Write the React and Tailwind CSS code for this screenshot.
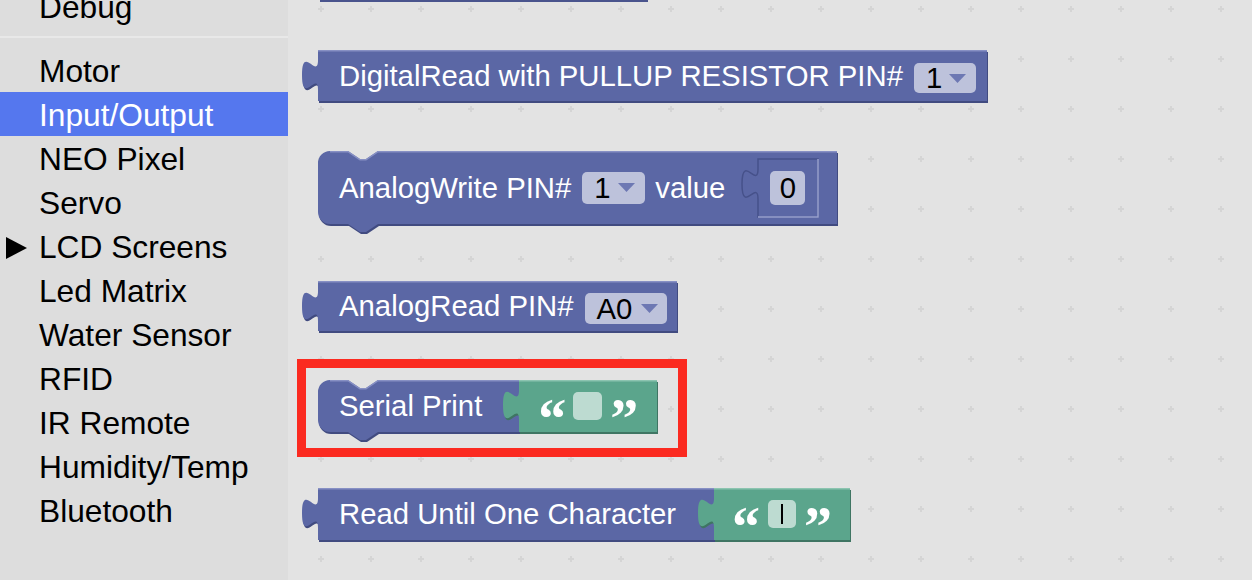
import React from 'react';

// Blockly toolbox + flyout with Input/Output blocks

const PURPLE = { fill: '#5b67a5', dark: '#414b80', light: '#8790c4' };
const GREEN = { fill: '#5ba58c', dark: '#3f7563', light: '#8cc4b0' };

const CATEGORIES = [
  'Motor',
  'Input/Output',
  'NEO Pixel',
  'Servo',
  'LCD Screens',
  'Led Matrix',
  'Water Sensor',
  'RFID',
  'IR Remote',
  'Humidity/Temp',
  'Bluetooth',
];

function blockPath({ x, w, h, tab = false, notch = false, round = 0 }) {
  const r = round;
  let d = `M ${x + r} 0`;
  if (notch) d += ` H ${x + 30} l 12 8 h 6 l 12 -8`;
  d += ` H ${x + w} V ${h}`;
  if (notch) d += ` H ${x + 60} l -12 8 h -6 l -12 -8`;
  d += ` H ${x + r}`;
  if (r) d += ` a ${r} ${r} 0 0 1 ${-r} ${-r}`;
  if (tab) d += ` V 40 c 0 -20 -16 16 -16 -15 s 16 5 16 -15`;
  d += ` V ${r}`;
  if (r) d += ` a ${r} ${r} 0 0 1 ${r} ${-r}`;
  return d + ' Z';
}

function Shape({ c, ...p }) {
  const d = blockPath(p);
  let top = `M ${p.x + (p.round || 0)} 0.75`;
  if (p.notch) top += ` H ${p.x + 30} l 12 8 h 6 l 12 -8`;
  top += ` H ${p.x + p.w}`;
  return (
    <g>
      <path d={d} fill={c.dark} transform="translate(1 2)" />
      <path d={d} fill={c.fill} />
      <path d={top} fill="none" stroke={c.light} strokeWidth="1.5" />
    </g>
  );
}

function Block({ className, width, height, parts, children }) {
  return (
    <div className={`relative ml-[14px] shrink-0 ${className}`}>
      <svg className="absolute left-0 top-0 overflow-visible" width={width} height={height}>
        {parts.map((p, i) => (
          <Shape key={i} {...p} />
        ))}
      </svg>
      <div className="relative flex h-full items-center whitespace-nowrap pl-[37px] text-[29.3px] leading-none text-white">
        {children}
      </div>
    </div>
  );
}

function Arrow() {
  return (
    <svg width="17" height="9" viewBox="0 0 17 9" className="shrink-0">
      <path d="M0 0 H17 L8.5 9 Z" fill="#6d78b3" />
    </svg>
  );
}

function Quote({ children }) {
  return (
    <span className="mt-[26px] flex w-[24px] justify-center font-['Liberation_Serif',serif] text-[56px] font-bold leading-none text-white">
      {children}
    </span>
  );
}

function Sidebar() {
  return (
    <aside className="w-[288px] shrink-0 bg-[#dddddd] text-[31.7px] text-black">
      <div className="-mt-[16px] flex h-[44px] items-center pl-[39px] pt-[3px]">Debug</div>
      <div className="mt-[8px] h-[2px] bg-[#e8e8e8]" />
      <div className="mt-[10px]">
        {CATEGORIES.map((name) => {
          const active = name === 'Input/Output';
          return (
            <div
              key={name}
              className={
                active
                  ? 'flex h-[44px] items-center bg-[#5577ee] pt-[3px] text-white'
                  : 'flex h-[44px] items-center pt-[3px]'
              }
            >
              <div className="flex w-[39px] shrink-0 items-center pl-[6px]">
                {name === 'LCD Screens' && (
                  <svg width="21" height="22" viewBox="0 0 21 22">
                    <path d="M0 0 L21 11 L0 22 Z" fill="#000" />
                  </svg>
                )}
              </div>
              <span>{name}</span>
            </div>
          );
        })}
      </div>
    </aside>
  );
}

function Workspace() {
  return (
    <main className="relative flex-1 overflow-hidden bg-[#e3e3e3]">
      <svg className="absolute inset-0 h-full w-full">
        <defs>
          <pattern id="grid" x="8" y="-16" width="50" height="50" patternUnits="userSpaceOnUse">
            <rect x="22" y="24" width="6" height="2" fill="#d5d5d5" />
            <rect x="24" y="22" width="2" height="6" fill="#d5d5d5" />
          </pattern>
        </defs>
        <rect width="100%" height="100%" fill="url(#grid)" />
      </svg>

      <div className="relative flex flex-col items-start">
        {/* bottom of the block above */}
        <div className="ml-[32px] h-[2px] w-[328px] bg-[#4a548d]" />

        {/* DigitalRead with PULLUP */}
        <Block
          className="mt-[48px] h-[51px] w-[685px]"
          width={685}
          height={51}
          parts={[{ c: PURPLE, x: 16, w: 669, h: 51, tab: true }]}
        >
          <span>DigitalRead with PULLUP RESISTOR PIN#</span>
          <div className="ml-[11px] mt-[5px] flex h-[30px] w-[62px] items-center rounded-[5px] bg-[#bdc2db] pl-[12px]">
            <span className="text-black">1</span>
            <span className="ml-[7px] flex">
              <Arrow />
            </span>
          </div>
        </Block>

        {/* AnalogWrite */}
        <Block
          className="mt-[50px] h-[73px] w-[535px]"
          width={535}
          height={73}
          parts={[{ c: PURPLE, x: 16, w: 519, h: 73, notch: true, round: 12 }]}
        >
          <span>AnalogWrite PIN#</span>
          <div className="ml-[11px] flex h-[32px] w-[63px] items-center rounded-[5px] bg-[#bdc2db] pl-[12px]">
            <span className="text-black">1</span>
            <span className="ml-[7px] flex">
              <Arrow />
            </span>
          </div>
          <span className="ml-[10px]">value</span>
          <div className="relative ml-[17px] flex h-[58px] w-[76px] items-center">
            <svg className="absolute left-0 top-0 overflow-visible" width="76" height="58">
              <path
                d="M16 0 H76 V58 H16 V40 c 0 -20 -16 16 -16 -15 s 16 5 16 -15 Z"
                fill="#5b67a5"
                stroke="#46518a"
                strokeWidth="1.5"
              />
              <path d="M76 0 V58 H16" fill="none" stroke="#9aa2cf" strokeWidth="1.5" />
            </svg>
            <div className="relative ml-[28px] flex h-[34px] w-[35px] items-center justify-center rounded-[5px] bg-[#bdc2db] text-black">
              0
            </div>
          </div>
        </Block>

        {/* AnalogRead */}
        <Block
          className="mt-[57px] h-[50px] w-[375px]"
          width={375}
          height={50}
          parts={[{ c: PURPLE, x: 16, w: 359, h: 50, tab: true }]}
        >
          <span>AnalogRead PIN#</span>
          <div className="ml-[11px] mt-[5px] flex h-[31px] w-[82px] items-center rounded-[5px] bg-[#bdc2db] pl-[12px]">
            <span className="text-black">A0</span>
            <span className="ml-[9px] flex">
              <Arrow />
            </span>
          </div>
        </Block>

        {/* Serial Print, highlighted */}
        <Block
          className="mt-[49px] h-[52px] w-[355px]"
          width={355}
          height={52}
          parts={[
            { c: PURPLE, x: 16, w: 201, h: 52, notch: true, round: 12 },
            { c: GREEN, x: 217, w: 138, h: 52, tab: true },
          ]}
        >
          <span>Serial Print</span>
          <span className="ml-[58px] flex">
            <Quote>“</Quote>
          </span>
          <div className="ml-[9px] h-[28px] w-[29px] rounded-[5px] bg-[#bddbd1]" />
          <span className="ml-[10px] flex">
            <Quote>”</Quote>
          </span>
          <div className="pointer-events-none absolute -left-[5px] -top-[21px] h-[98px] w-[390px] border-[9px] border-[#fb2a20]" />
        </Block>

        {/* Read Until One Character */}
        <Block
          className="mt-[56px] h-[52px] w-[548px]"
          width={548}
          height={52}
          parts={[
            { c: PURPLE, x: 16, w: 396, h: 52, tab: true },
            { c: GREEN, x: 412, w: 136, h: 52, tab: true },
          ]}
        >
          <span>Read Until One Character</span>
          <span className="ml-[58px] flex">
            <Quote>“</Quote>
          </span>
          <div className="ml-[10px] flex h-[28px] w-[28px] items-center justify-center rounded-[5px] bg-[#bddbd1]">
            <div className="h-[20px] w-[2px] bg-black" />
          </div>
          <span className="ml-[10px] flex">
            <Quote>”</Quote>
          </span>
        </Block>
      </div>
    </main>
  );
}

export default function App() {
  return (
    <div className="flex h-[580px] w-full overflow-hidden font-['Liberation_Sans',Arial,sans-serif]">
      <Sidebar />
      <Workspace />
    </div>
  );
}
